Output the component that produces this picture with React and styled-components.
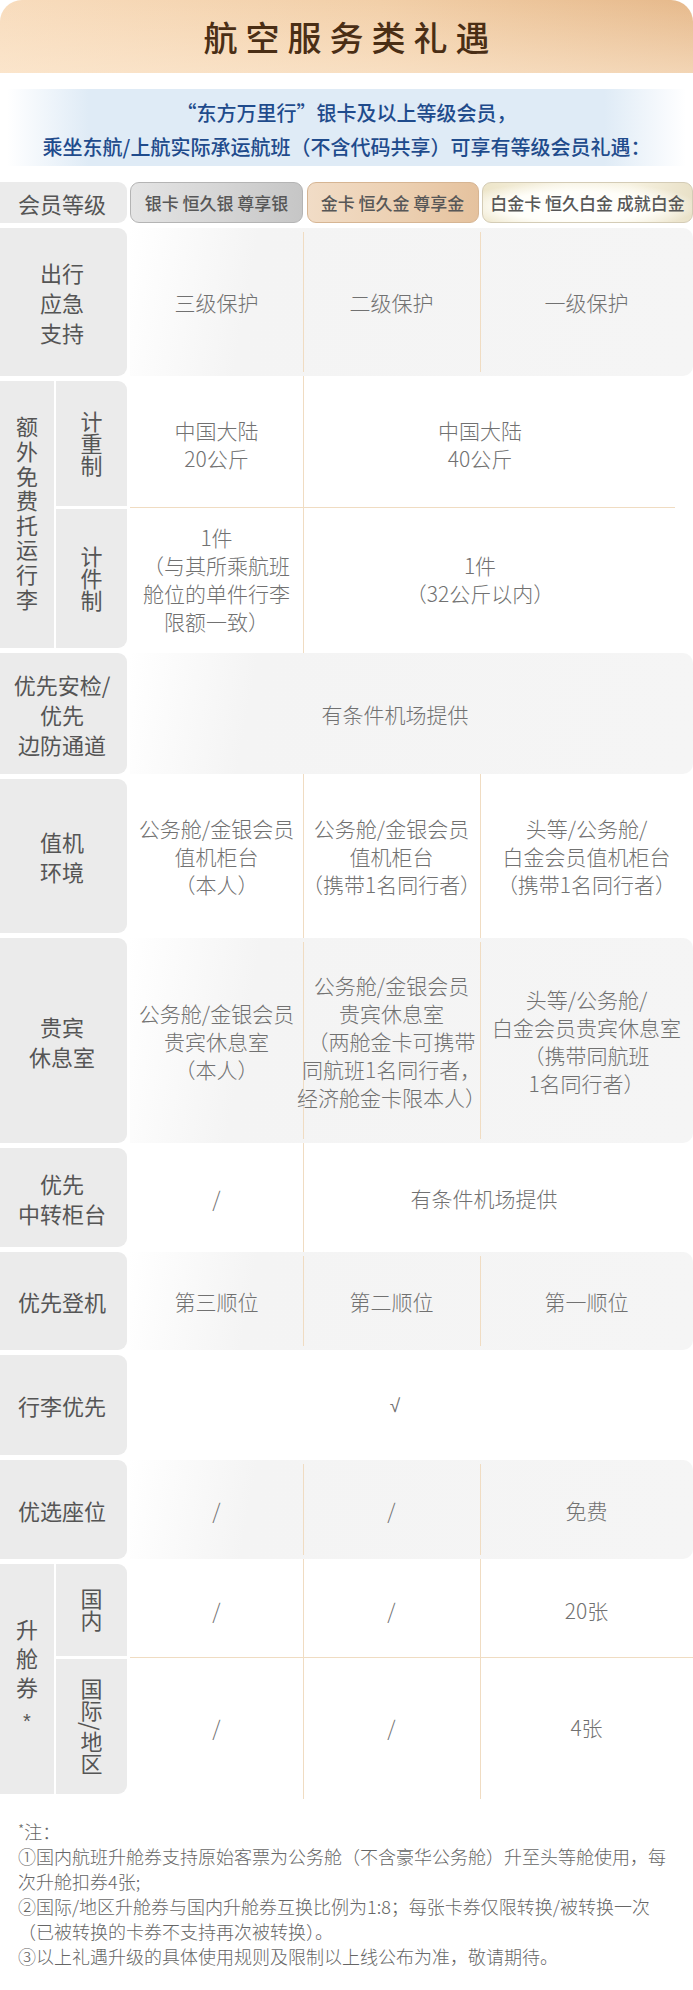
import styled, { createGlobalStyle, css } from 'styled-components';

const GlobalStyle = createGlobalStyle`
    html, body {
        margin: 0;
        padding: 0;
        background: #ffffff;
    }
    body {
        font-family: 'Noto Sans CJK SC', 'Noto Sans', sans-serif;
    }
`;

const PEACH = '#f0dcc2';
const COLS = [173, 350];

const Page = styled.div`
    width: 693px;
    padding-bottom: 22px;
`;

const Banner = styled.div`
    height: 73px;
    border-radius: 22px 22px 0 0;
    background: linear-gradient(180deg, rgba(255, 255, 255, 0) 0%, rgba(253, 236, 215, 0.55) 100%),
        linear-gradient(90deg, #f8dcbd 0%, #f2cfa8 55%, #e6b98b 100%);
    display: flex;
    align-items: center;
    justify-content: center;
`;

const Title = styled.h1`
    margin: 0;
    font-size: 34px;
    font-weight: 500;
    letter-spacing: 8px;
    margin-right: -8px;
    color: #4a2e15;
`;

const Intro = styled.div`
    margin: 16px 7px 16px;
    height: 77px;
    padding-top: 4px;
    box-sizing: border-box;
    background: linear-gradient(
        90deg,
        rgba(222, 234, 245, 0) 0%,
        #dfebf6 12%,
        #dfebf6 88%,
        rgba(222, 234, 245, 0) 100%
    );
    display: flex;
    flex-direction: column;
    align-items: center;
    justify-content: center;
`;

const IntroLine = styled.div`
    font-size: 20px;
    line-height: 34px;
    font-weight: 500;
    color: #1f4b8c;
    white-space: nowrap;
`;

const Table = styled.div`
    display: flex;
    flex-direction: column;
    gap: 5px;
`;

const Row = styled.div`
    display: grid;
    grid-template-columns: 127px 1fr;
    column-gap: 3px;
    height: ${({ $h }) => $h}px;
`;

const Label = styled.div`
    background: #ebebeb;
    border-radius: 0 9px 9px 0;
    display: flex;
    flex-direction: column;
    align-items: center;
    justify-content: center;
    text-align: center;
    padding-right: 3px;
    font-size: 22px;
    line-height: 30px;
    color: #555555;
    white-space: nowrap;
`;

const LabelGroup = styled.div`
    display: grid;
    grid-template-columns: 54px 71px;
    grid-template-rows: ${({ $rows }) => $rows};
    column-gap: 2px;
    row-gap: 3px;
    border-radius: 0 9px 9px 0;
    overflow: hidden;
`;

const VLabel = styled.div`
    grid-row: ${({ $span }) => ($span ? 'span 2' : 'auto')};
    background: #ebebeb;
    display: flex;
    align-items: center;
    justify-content: center;
    writing-mode: vertical-rl;
    font-size: 22px;
    line-height: 24px;
    letter-spacing: ${({ $ls }) => $ls || 0}px;
    color: #555555;
`;

const Star = styled.span`
    font-family: 'Liberation Sans', sans-serif;
    font-size: 20px;
    text-orientation: upright;
    margin-top: 4px;
`;

const dividerLayers = (cols, inset) =>
    cols
        .map(
            (x) =>
                `linear-gradient(${PEACH}, ${PEACH}) ${x}px ${inset}px / 1px calc(100% - ${
                    inset * 2
                }px) no-repeat`
        )
        .join(', ');

const DataArea = styled.div`
    display: grid;
    grid-template-columns: 173px 177px 1fr;
    grid-template-rows: ${({ $rows }) => $rows || '1fr'};
    row-gap: 3px;
    ${({ $stripe, $cols, $line }) =>
        $stripe
            ? css`
                  border-radius: 0 10px 10px 0;
                  background: ${$cols.length ? dividerLayers($cols, 4) + ',' : ''}
                      linear-gradient(100deg, #ffffff 0%, #f4f4f4 22%, #f5f5f5 100%);
              `
            : css`
                  margin: -5px 0;
                  padding: 5px 0;
                  background: ${[
                      $line
                          ? `linear-gradient(${PEACH}, ${PEACH}) 0 ${$line.y}px / calc(100% - ${$line.inset}px) 1px no-repeat`
                          : null,
                      $cols.length ? dividerLayers($cols, 0) : null,
                  ]
                      .filter(Boolean)
                      .join(', ') || 'transparent'};
              `}
`;

const Cell = styled.div`
    grid-column: span ${({ $span }) => $span || 1};
    display: flex;
    flex-direction: column;
    align-items: center;
    justify-content: center;
    text-align: center;
    padding-right: ${({ $shift }) => $shift || 0}px;
    font-size: 21px;
    line-height: 28px;
    font-weight: 300;
    color: #717171;
    white-space: nowrap;
`;

const Check = styled.span`
    font-family: 'DejaVu Sans', sans-serif;
    font-size: 19px;
`;

const ChipRow = styled.div`
    display: grid;
    grid-template-columns: 173px 172px 1fr;
    column-gap: 3.5px;
`;

const chipSkins = {
    silver: css`
        background: linear-gradient(90deg, #e4e4e4 0%, #d6d6d6 50%, #c6c6c6 100%);
        border-color: #b4b4b4;
    `,
    gold: css`
        background: linear-gradient(90deg, #f1dcc6 0%, #ecd0b2 55%, #e5c29e 100%);
        border-color: #d6b593;
    `,
    platinum: css`
        background: radial-gradient(ellipse at 45% 60%, #ffffff 0%, #fffef9 45%, rgba(255, 255, 255, 0) 75%),
            linear-gradient(90deg, #ede5c9 0%, #f8f4e6 40%, #f7f2e1 70%, #e9e1c8 100%);
        border-color: #d4ccb6;
    `,
};

const Chip = styled.div`
    border: 1px solid;
    border-radius: 9px;
    display: flex;
    align-items: center;
    justify-content: center;
    font-size: 17px;
    font-weight: 500;
    color: #575757;
    white-space: pre;
    ${({ $skin }) => chipSkins[$skin]}
`;

const Notes = styled.div`
    margin-top: 23px;
    padding: 0 12px 0 18px;
    font-size: 18px;
    line-height: 25px;
    color: #666666;
    font-weight: 300;
    white-space: nowrap;
`;

const NoteStar = styled.span`
    font-size: 14px;
    vertical-align: 4px;
`;

function Lines({ children }) {
    return children.split('\n').map((l, i) => <div key={i}>{l}</div>);
}

const rows = [
    {
        label: '出行\n应急\n支持',
        h: 148,
        stripe: true,
        cols: COLS,
        cells: [{ t: '三级保护' }, { t: '二级保护' }, { t: '一级保护' }],
    },
    {
        group: true,
        main: '额外免费托运行李',
        mainLs: 2.6,
        subs: ['计重制', '计件制'],
        subLs: 0,
        subRows: '125px 139px',
        h: 267,
        cols: [173],
        line: { y: 131, inset: 18 },
        cells: [
            { t: '中国大陆\n20公斤' },
            { t: '中国大陆\n40公斤', span: 2, shift: 36 },
            { t: '1件\n（与其所乘航班\n舱位的单件行李\n限额一致）' },
            { t: '1件\n（32公斤以内）', span: 2, shift: 36 },
        ],
    },
    {
        label: '优先安检/\n优先\n边防通道',
        h: 121,
        stripe: true,
        cols: [],
        cells: [{ t: '有条件机场提供', span: 3, shift: 33 }],
    },
    {
        label: '值机\n环境',
        h: 154,
        cols: COLS,
        cells: [
            { t: '公务舱/金银会员\n值机柜台\n（本人）' },
            { t: '公务舱/金银会员\n值机柜台\n（携带1名同行者）' },
            { t: '头等/公务舱/\n白金会员值机柜台\n（携带1名同行者）' },
        ],
    },
    {
        label: '贵宾\n休息室',
        h: 205,
        stripe: true,
        cols: COLS,
        cells: [
            { t: '公务舱/金银会员\n贵宾休息室\n（本人）' },
            { t: '公务舱/金银会员\n贵宾休息室\n（两舱金卡可携带\n同航班1名同行者，\n经济舱金卡限本人）' },
            { t: '头等/公务舱/\n白金会员贵宾休息室\n（携带同航班\n1名同行者）' },
        ],
    },
    {
        label: '优先\n中转柜台',
        h: 99,
        cols: [173],
        cells: [{ t: '/' }, { t: '有条件机场提供', span: 2, shift: 28 }],
    },
    {
        label: '优先登机',
        h: 98,
        stripe: true,
        cols: COLS,
        cells: [{ t: '第三顺位' }, { t: '第二顺位' }, { t: '第一顺位' }],
    },
    {
        label: '行李优先',
        h: 100,
        cols: [],
        cells: [{ check: true, span: 3, shift: 33 }],
    },
    {
        label: '优选座位',
        h: 99,
        stripe: true,
        cols: COLS,
        cells: [{ t: '/' }, { t: '/' }, { t: '免费' }],
    },
    {
        group: true,
        main: '升舱券',
        mainLs: 7,
        star: true,
        subs: ['国内', '国际/地区'],
        subLs: 0,
        subRows: '92px 135px',
        h: 230,
        cols: COLS,
        line: { y: 98, inset: 0 },
        cells: [{ t: '/' }, { t: '/' }, { t: '20张' }, { t: '/' }, { t: '/' }, { t: '4张' }],
    },
];

function App() {
    return (
        <Page>
            <GlobalStyle />
            <Banner>
                <Title>航空服务类礼遇</Title>
            </Banner>
            <Intro>
                <IntroLine>“东方万里行”银卡及以上等级会员，</IntroLine>
                <IntroLine>乘坐东航/上航实际承运航班（不含代码共享）可享有等级会员礼遇：</IntroLine>
            </Intro>
            <Table>
                <Row $h={41}>
                    <Label>会员等级</Label>
                    <ChipRow>
                        <Chip $skin="silver">银卡 恒久银 尊享银</Chip>
                        <Chip $skin="gold">金卡 恒久金 尊享金</Chip>
                        <Chip $skin="platinum">白金卡 恒久白金 成就白金</Chip>
                    </ChipRow>
                </Row>
                {rows.map((r, i) => (
                    <Row key={i} $h={r.h}>
                        {r.group ? (
                            <LabelGroup $rows={r.subRows}>
                                <VLabel $span $ls={r.mainLs}>
                                    {r.main}
                                    {r.star && <Star>*</Star>}
                                </VLabel>
                                {r.subs.map((s) => (
                                    <VLabel key={s} $ls={r.subLs}>
                                        {s}
                                    </VLabel>
                                ))}
                            </LabelGroup>
                        ) : (
                            <Label>
                                <Lines>{r.label}</Lines>
                            </Label>
                        )}
                        <DataArea
                            $stripe={r.stripe}
                            $cols={r.cols}
                            $line={r.line}
                            $rows={r.subRows}
                        >
                            {r.cells.map((c, j) => (
                                <Cell key={j} $span={c.span} $shift={c.shift}>
                                    {c.check ? <Check>√</Check> : <Lines>{c.t}</Lines>}
                                </Cell>
                            ))}
                        </DataArea>
                    </Row>
                ))}
            </Table>
            <Notes>
                <div>
                    <NoteStar>*</NoteStar>注：
                </div>
                <div>①国内航班升舱券支持原始客票为公务舱（不含豪华公务舱）升至头等舱使用，每</div>
                <div>次升舱扣券4张;</div>
                <div>②国际/地区升舱券与国内升舱券互换比例为1:8；每张卡券仅限转换/被转换一次</div>
                <div>（已被转换的卡券不支持再次被转换）。</div>
                <div>③以上礼遇升级的具体使用规则及限制以上线公布为准，敬请期待。</div>
            </Notes>
        </Page>
    );
}

export default App;
